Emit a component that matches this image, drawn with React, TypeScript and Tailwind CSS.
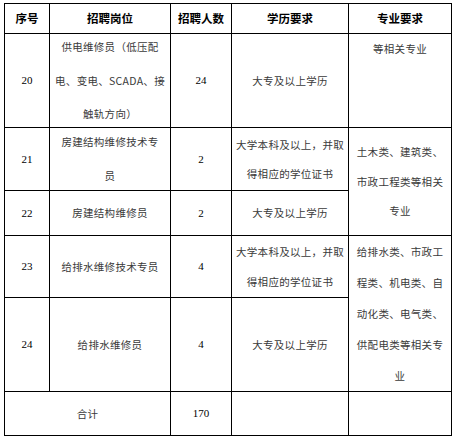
import type { ReactNode } from 'react';

const cjk = "font-['Noto_Sans_CJK_SC',sans-serif]";
const serif = "font-['Liberation_Serif','Noto_Sans_CJK_SC',serif]";

const td = 'border border-black p-0 text-center align-middle';
const body = `${cjk} text-[10.5px] tracking-[0.3px] text-[#3a3a3a]`;
const num = `${serif} text-[11px] text-black`;

// fixed-height box so tall leading can overflow evenly without stretching the row
function Lines({ h, lh, children }: { h: string; lh: string; children: ReactNode }) {
  return <div className={`flex flex-col justify-center ${h} ${lh}`}>{children}</div>;
}

export default function App() {
  return (
    <div className="h-[438px] w-[456px] bg-white pl-[4px] pt-[3px]">
      <table className="w-[447px] table-fixed border-collapse">
        <colgroup>
          <col className="w-[45px]" />
          <col className="w-[121px]" />
          <col className="w-[61px]" />
          <col className="w-[117px]" />
          <col className="w-[103px]" />
        </colgroup>
        <thead>
          <tr className="h-[30px]">
            {['序号', '招聘岗位', '招聘人数', '学历要求', '专业要求'].map((h) => (
              <th key={h} className={`${td} ${cjk} text-[11.5px] font-bold text-black`}>
                {h}
              </th>
            ))}
          </tr>
        </thead>
        <tbody>
          <tr className="h-[94px]">
            <td className={`${td} ${num}`}>20</td>
            <td className={`${td} ${body}`}>
              <Lines h="h-[90px]" lh="leading-[33.5px]">
                <span>供电维修员（低压配</span>
                <span>电、变电、SCADA、接</span>
                <span>触轨方向）</span>
              </Lines>
            </td>
            <td className={`${td} ${num}`}>24</td>
            <td className={`${td} ${body}`}>大专及以上学历</td>
            <td className={`${td} ${body} !align-top leading-[30px]`}>等相关专业</td>
          </tr>
          <tr className="h-[63px]">
            <td className={`${td} ${num}`}>21</td>
            <td className={`${td} ${body}`}>
              <Lines h="h-[58px]" lh="leading-[34px]">
                <span>房建结构维修技术专</span>
                <span>员</span>
              </Lines>
            </td>
            <td className={`${td} ${num}`}>2</td>
            <td className={`${td} ${body}`}>
              <Lines h="h-[58px]" lh="leading-[29px]">
                <span>大学本科及以上，并取</span>
                <span>得相应的学位证书</span>
              </Lines>
            </td>
            <td rowSpan={2} className={`${td} ${body} leading-[29.5px]`}>
              土木类、建筑类、
              <br />
              市政工程类等相关
              <br />
              专业
            </td>
          </tr>
          <tr className="h-[45px]">
            <td className={`${td} ${num}`}>22</td>
            <td className={`${td} ${body}`}>房建结构维修员</td>
            <td className={`${td} ${num}`}>2</td>
            <td className={`${td} ${body}`}>大专及以上学历</td>
          </tr>
          <tr className="h-[62px]">
            <td className={`${td} ${num}`}>23</td>
            <td className={`${td} ${body}`}>给排水维修技术专员</td>
            <td className={`${td} ${num}`}>4</td>
            <td className={`${td} ${body}`}>
              <Lines h="h-[58px]" lh="leading-[30px]">
                <span>大学本科及以上，并取</span>
                <span>得相应的学位证书</span>
              </Lines>
            </td>
            <td rowSpan={2} className={`${td} ${body}`}>
              <Lines h="h-[150px]" lh="leading-[31px]">
                <span>给排水类、市政工</span>
                <span>程类、机电类、自</span>
                <span>动化类、电气类、</span>
                <span>供配电类等相关专</span>
                <span>业</span>
              </Lines>
            </td>
          </tr>
          <tr className="h-[94px]">
            <td className={`${td} ${num}`}>24</td>
            <td className={`${td} ${body}`}>给排水维修员</td>
            <td className={`${td} ${num}`}>4</td>
            <td className={`${td} ${body}`}>大专及以上学历</td>
          </tr>
          <tr className="h-[44px]">
            <td colSpan={2} className={`${td} ${body}`}>
              合计
            </td>
            <td className={`${td} ${num}`}>170</td>
            <td className={td}></td>
            <td className={td}></td>
          </tr>
        </tbody>
      </table>
    </div>
  );
}
